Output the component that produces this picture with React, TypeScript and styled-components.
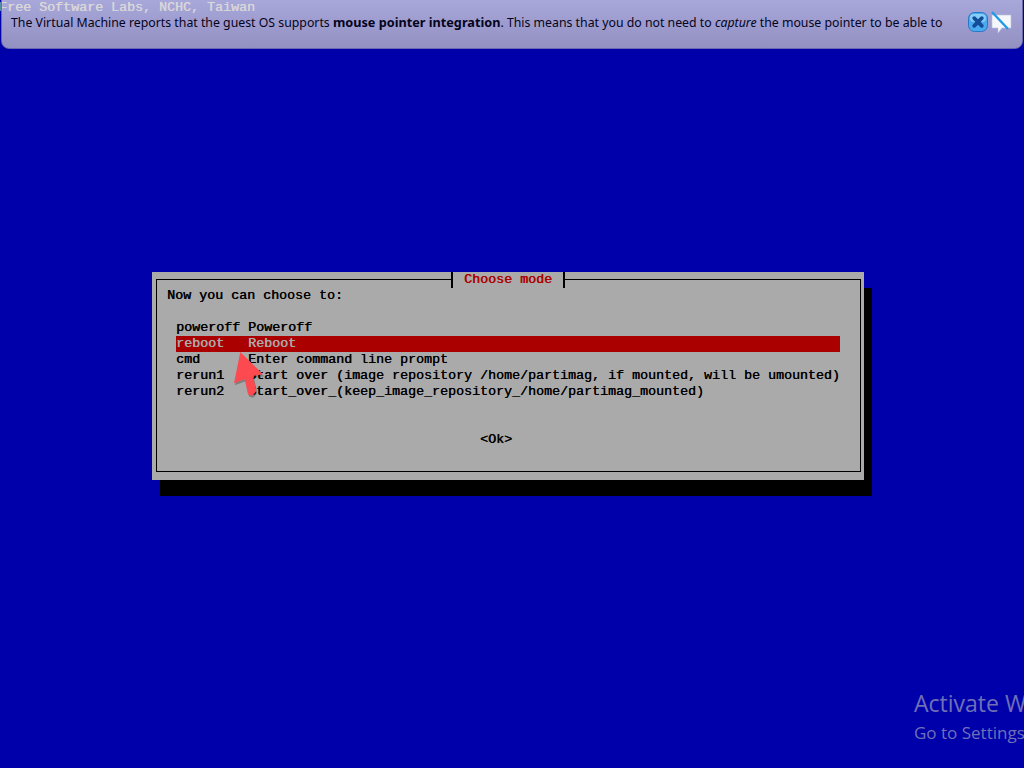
import React from 'react';
import styled, { createGlobalStyle, css } from 'styled-components';

const GlobalStyle = createGlobalStyle`
	html, body {
		margin: 0;
		padding: 0;
		width: 1024px;
		height: 768px;
		overflow: hidden;
		background: #0000aa;
	}
`;

const consoleFont = css`
	font-family: "Liberation Mono", monospace;
	font-size: 13.33px;
	line-height: 16px;
	text-shadow: 0.4px 0 0 currentColor;
	white-space: pre;
`;

const Screen = styled.div`
	position: relative;
	width: 1024px;
	height: 768px;
	overflow: hidden;
	background: #0000aa;
	padding: 272px 0 0 152px;
	box-sizing: border-box;
	color: #000;
`;

const BootLine = styled.div`
	${consoleFont}
	position: absolute;
	top: 0;
	left: -1px;
	color: #aaaaaa;
`;

const Dialog = styled.div`
	${consoleFont}
	width: 712px;
	height: 208px;
	box-sizing: border-box;
	padding: 7px 3px 8px 4px;
	background: #aaaaaa;
	box-shadow: 8px 16px 0 #000;
`;

const Frame = styled.div`
	position: relative;
	height: 100%;
	box-sizing: border-box;
	border: 1px solid #000;
	padding: 8px 0 0 10px;
`;

const Title = styled.div`
	position: absolute;
	top: -8px;
	left: 294px;
	width: 114px;
	height: 16px;
	box-sizing: border-box;
	background: #aaaaaa;
	border-left: 2px solid #000;
	border-right: 2px solid #000;
	color: #aa0000;
	text-align: center;
`;

const Prompt = styled.div`
	margin-bottom: 16px;
`;

const MenuList = styled.div`
	display: flex;
	flex-direction: column;
	margin-left: 9px;
	width: 664px;
`;

const MenuRow = styled.div<{ $active?: boolean }>`
	display: grid;
	grid-template-columns: 72px 1fr;
	height: 16px;
	background: ${p => (p.$active ? '#aa0000' : 'transparent')};
	color: ${p => (p.$active ? '#aaaaaa' : '#000')};
`;

const OkButton = styled.div`
	margin: 32px 0 0 313px;
`;

const Notice = styled.div`
	position: absolute;
	top: -8px;
	left: 1px;
	width: 1022px;
	height: 57px;
	box-sizing: border-box;
	border: 1px solid #6a68ae;
	border-radius: 8px;
	background: linear-gradient(to bottom, rgba(245, 243, 244, 0.7), rgba(208, 206, 204, 0.7));
	display: flex;
	align-items: flex-start;
	padding: 21px 10px 0 9px;
`;

const NoticeText = styled.div`
	flex: 1;
	font-family: "Noto Sans", sans-serif;
	font-size: 12.3px;
	line-height: 16px;
	color: #04041c;
	white-space: pre;
	b { font-weight: 700; font-size: 12.7px; }
	i { font-style: italic; }
`;

const NoticeIcons = styled.div`
	display: flex;
	align-items: center;
	gap: 3px;
	margin-top: -3px;
`;

const Pointer = styled.svg`
	position: absolute;
	left: 228px;
	top: 346px;
`;

const Watermark = styled.div`
	position: absolute;
	left: 914px;
	top: 687px;
	font-family: "Open Sans", sans-serif;
	color: #7070b8;
	white-space: pre;
`;

const WatermarkTitle = styled.div`
	font-size: 23px;
	line-height: 32px;
`;

const WatermarkHint = styled.div`
	font-size: 17px;
	line-height: 28px;
`;

const CloseIcon = () => (
	<svg width="20" height="20" viewBox="0 0 20 20">
		<rect x="0.5" y="0.5" width="19" height="19" rx="6" fill="#4aaaf0" stroke="#2c74c4" />
		<rect x="2" y="2" width="16" height="8" rx="4" fill="#86cef8" />
		<path d="M6.2 6.2l7.6 7.6M13.8 6.2l-7.6 7.6" stroke="#154c98" strokeWidth="3.8" strokeLinecap="round" />
	</svg>
);

const BubbleIcon = () => (
	<svg width="21" height="22" viewBox="0 0 21 22">
		<path d="M1 4h19v13H11l-4 5v-5H1z" fill="#f6f7fb" stroke="#bcc0dc" strokeWidth="0.6" />
		<path d="M1 1l16 17" stroke="#1f9ae8" strokeWidth="2.4" />
	</svg>
);

const menu = [
	['poweroff', 'Poweroff'],
	['reboot', 'Reboot'],
	['cmd', 'Enter command line prompt'],
	['rerun1', 'Start over (image repository /home/partimag, if mounted, will be umounted)'],
	['rerun2', 'Start_over_(keep_image_repository_/home/partimag_mounted)'],
];

export default function App() {
	return (
		<Screen>
			<GlobalStyle />
			<BootLine>Free Software Labs, NCHC, Taiwan</BootLine>
			<Dialog>
				<Frame>
					<Title>Choose mode</Title>
					<Prompt>Now you can choose to:</Prompt>
					<MenuList>
						{menu.map(([key, label]) => (
							<MenuRow key={key} $active={key === 'reboot'}>
								<span>{key}</span>
								<span>{label}</span>
							</MenuRow>
						))}
					</MenuList>
					<OkButton>&lt;Ok&gt;</OkButton>
				</Frame>
			</Dialog>
			<Notice>
				<NoticeText>
					The Virtual Machine reports that the guest OS supports <b>mouse pointer integration</b>. This means that you do not need to <i>capture</i> the mouse pointer to be able to
				</NoticeText>
				<NoticeIcons>
					<CloseIcon />
					<BubbleIcon />
				</NoticeIcons>
			</Notice>
			<Pointer width="40" height="56" viewBox="228 346 40 56">
				<path d="M240.3 352L234 383.3L244.7 379.3L248 394.3Q250.5 396 253 395.3L256.3 391L253 376L263 374.3Z" fill="#000" opacity="0.25" transform="translate(1 2)" />
				<path d="M240.3 352L234 383.3L244.7 379.3L248 394.3Q250.5 396 253 395.3L256.3 391L253 376L263 374.3Z" fill="#fd4a50" />
			</Pointer>
			<Watermark>
				<WatermarkTitle>Activate Windows</WatermarkTitle>
				<WatermarkHint>Go to Settings to activate Windows.</WatermarkHint>
			</Watermark>
		</Screen>
	);
}
